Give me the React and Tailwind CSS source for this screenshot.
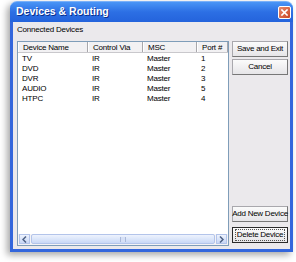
import React from 'react';

const columns = [
  { label: 'Device Name', w: 'w-[70px]' },
  { label: 'Control Via', w: 'w-[55px]' },
  { label: 'MSC', w: 'w-[54px]' },
  { label: 'Port #', w: 'w-[31px]' },
];

const devices = [
  { name: 'TV', via: 'IR', msc: 'Master', port: '1' },
  { name: 'DVD', via: 'IR', msc: 'Master', port: '2' },
  { name: 'DVR', via: 'IR', msc: 'Master', port: '3' },
  { name: 'AUDIO', via: 'IR', msc: 'Master', port: '5' },
  { name: 'HTPC', via: 'IR', msc: 'Master', port: '4' },
];

const Button = ({ children, focused }) => (
  <button
    className={`w-[56px] h-[16px] flex items-center justify-center whitespace-nowrap text-[8px] tracking-[-0.25px] leading-none text-black bg-gradient-to-b from-[#fbfbfb] to-[#e6e5e8] ${
      focused
        ? 'border border-[#2a2a2a]'
        : 'border border-[#a9a8ad] border-b-[#777] border-r-[#777]'
    }`}
  >
    {focused ? (
      <span className="border border-dotted border-[#555] px-[1px] py-[1px]">{children}</span>
    ) : (
      children
    )}
  </button>
);

const App = () => {
  return (
    <div
      className="w-[296px] h-[262px] bg-white pl-[10px] pt-[1px] overflow-hidden"
      style={{ fontFamily: '"Liberation Sans", Arial, sans-serif' }}
    >
      <div className="w-[283px] h-[251px] flex flex-col rounded-t-[7px] shadow-[-3px_3px_7px_rgba(0,0,0,0.35)]">
        {/* title bar */}
        <div className="h-[21px] flex items-center justify-between pl-[6px] pr-[2px] rounded-t-[7px] bg-gradient-to-b from-[#4a95f6] via-[#2c6fe4] to-[#2463dc] border-t border-[#7ab0f8]">
          <span className="text-white font-bold text-[10.5px] [text-shadow:1px_1px_0_#0a2f8c]">
            Devices &amp; Routing
          </span>
          <div className="w-[13px] h-[13px] rounded-[2px] border border-white bg-gradient-to-br from-[#e88a6c] to-[#c9431f] flex items-center justify-center">
            <svg width="7" height="7" viewBox="0 0 7 7">
              <path d="M1 1L6 6M6 1L1 6" stroke="white" strokeWidth="1.6" strokeLinecap="square" />
            </svg>
          </div>
        </div>

        {/* body */}
        <div className="flex-1 flex flex-col bg-[#ebe9ec] border-x-[3px] border-b-[3px] border-[#3366dc] pl-[4px] pr-[2px]">
          <div className="h-[19px] pt-[3px] text-[8px] tracking-[-0.2px] leading-[10px] text-black">Connected Devices</div>

          <div className="flex-1 flex gap-[3px] pb-[3px]">
            {/* list view */}
            <div className="w-[212px] flex flex-col bg-white border border-[#7f9db9]">
              <div className="h-[11px] flex bg-[#f2f1f3] border-b border-[#c9c8cc]">
                {columns.map((c) => (
                  <div
                    key={c.label}
                    className={`${c.w} h-full pl-[5px] text-[8px] tracking-[-0.2px] leading-[11px] text-black border-r border-[#a8a7ab] shadow-[inset_1px_0_0_#fff]`}
                  >
                    {c.label}
                  </div>
                ))}
              </div>

              <div className="flex-1 pt-[1px]">
                {devices.map((d) => (
                  <div key={d.name} className="h-[10px] flex text-[8px] tracking-[-0.2px] leading-[10px] text-black">
                    <div className="w-[70px] pl-[4px]">{d.name}</div>
                    <div className="w-[55px] pl-[4px]">{d.via}</div>
                    <div className="w-[54px] pl-[4px]">{d.msc}</div>
                    <div className="w-[31px] pl-[4px]">{d.port}</div>
                  </div>
                ))}
              </div>

              {/* horizontal scrollbar */}
              <div className="h-[11px] flex items-stretch bg-[#f4f3f5] px-[1px] pb-[1px]">
                <div className="w-[11px] flex items-center justify-center bg-gradient-to-b from-[#eef3fd] to-[#c7d6f5] border border-[#b3c4ea]">
                  <svg width="5" height="7" viewBox="0 0 5 7">
                    <path d="M4 0.5L1 3.5L4 6.5" stroke="#4d6185" strokeWidth="1.5" fill="none" />
                  </svg>
                </div>
                <div className="flex-1 mx-[1px] flex items-center justify-center bg-gradient-to-b from-[#eef3fd] to-[#c9d8f6] border border-[#b3c4ea] rounded-[2px]">
                  <div className="w-[6px] h-[5px] border-x border-[#aab9d9] bg-[#d6e0f6]" />
                </div>
                <div className="w-[11px] flex items-center justify-center bg-gradient-to-b from-[#eef3fd] to-[#c7d6f5] border border-[#b3c4ea]">
                  <svg width="5" height="7" viewBox="0 0 5 7">
                    <path d="M1 0.5L4 3.5L1 6.5" stroke="#4d6185" strokeWidth="1.5" fill="none" />
                  </svg>
                </div>
              </div>
            </div>

            {/* buttons */}
            <div className="flex flex-col justify-between pb-[3px]">
              <div className="flex flex-col gap-[2px]">
                <Button>Save and Exit</Button>
                <Button>Cancel</Button>
              </div>
              <div className="flex flex-col gap-[5px]">
                <Button>Add New Device</Button>
                <Button focused>Delete Device</Button>
              </div>
            </div>
          </div>
        </div>
      </div>
    </div>
  );
};

export default App;
